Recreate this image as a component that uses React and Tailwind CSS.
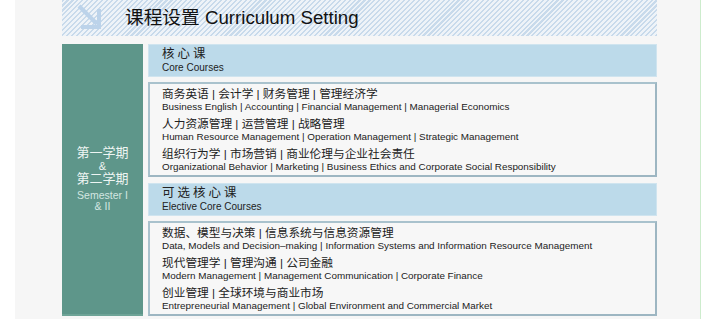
import React from 'react';

const coreGroups = [
    {
        cn: '商务英语 | 会计学 | 财务管理 | 管理经济学',
        en: 'Business English | Accounting | Financial Management | Managerial Economics',
    },
    {
        cn: '人力资源管理 | 运营管理 | 战略管理',
        en: 'Human Resource Management | Operation Management | Strategic Management',
    },
    {
        cn: '组织行为学 | 市场营销 | 商业伦理与企业社会责任',
        en: 'Organizational Behavior | Marketing | Business Ethics and Corporate Social Responsibility',
    },
];

const electiveGroups = [
    {
        cn: '数据、模型与决策 | 信息系统与信息资源管理',
        en: 'Data, Models and Decision–making | Information Systems and Information Resource Management',
    },
    {
        cn: '现代管理学 | 管理沟通 | 公司金融',
        en: 'Modern Management | Management Communication | Corporate Finance',
    },
    {
        cn: '创业管理 | 全球环境与商业市场',
        en: 'Entrepreneurial Management | Global Environment and Commercial Market',
    },
];

const SectionHeader = ({ cn, en }) => (
    <div className="h-[33px] bg-[#bcdaea] border border-[#cfe4ef] pl-[13px] flex flex-col justify-center">
        <div className="text-[12.5px] leading-[15px] tracking-[3px] text-[#222]">{cn}</div>
        <div className="text-[10px] leading-[12px] text-[#222]">{en}</div>
    </div>
);

const CourseBox = ({ groups }) => (
    <div className="h-[95px] border-2 border-[#a9c2cd] border-r-[#9db6c2] border-b-[#9db6c2] bg-[#f7f7f7] pl-[12px] flex flex-col justify-center gap-[3px]">
        {groups.map((g, i) => (
            <div key={i}>
                <div className="text-[11.7px] leading-[15px] text-[#222] whitespace-nowrap">{g.cn}</div>
                <div className="text-[9.9px] leading-[12px] text-[#222] whitespace-nowrap">{g.en}</div>
            </div>
        ))}
    </div>
);

const App = () => {
    return (
        <div
            className="w-[701px] h-[320px] bg-white overflow-hidden"
            style={{ fontFamily: '"Liberation Sans", "Noto Sans CJK SC", sans-serif' }}
        >
            <div className="ml-[15px] w-[686px] h-[319px] bg-[#f6f6f6] border-r border-[#cdeccd] pl-[47px]">
                {/* Header */}
                <div className="w-[595px] h-[36px] flex items-center bg-[repeating-linear-gradient(135deg,#c8daeb_0px,#c8daeb_1.5px,#eef3f8_1.5px,#eef3f8_3.5px)]">
                    <svg width="40" height="36" viewBox="0 0 40 36" className="ml-[11px]">
                        <path d="M6 6 L24 24" stroke="#bcd3ea" strokeWidth="4" fill="none" />
                        <path d="M26 9 V27 H8" stroke="#bcd3ea" strokeWidth="4" fill="none" />
                    </svg>
                    <div className="ml-[12px] text-[18.7px] leading-none text-[#111] whitespace-nowrap">
                        课程设置 Curriculum Setting
                    </div>
                </div>

                {/* Body */}
                <div className="mt-[8px] flex gap-[5px]">
                    <div className="w-[81px] h-[272px] bg-[#5e968a] border-b-2 border-[#6ea497] flex flex-col items-center justify-center text-center">
                        <div className="text-[13px] leading-[14px] text-[#eef5f3]">第一学期</div>
                        <div className="text-[11px] leading-[12px] text-[#eef5f3]">&amp;</div>
                        <div className="text-[13px] leading-[14px] text-[#eef5f3]">第二学期</div>
                        <div className="mt-[4px] text-[10.5px] leading-[11px] text-[#d3e6e1]">Semester I</div>
                        <div className="text-[10.5px] leading-[11px] text-[#d3e6e1]">&amp; II</div>
                    </div>
                    <div className="w-[509px] flex flex-col">
                        <SectionHeader cn="核心课" en="Core Courses" />
                        <div className="mt-[5px]">
                            <CourseBox groups={coreGroups} />
                        </div>
                        <div className="mt-[6px]">
                            <SectionHeader cn="可选核心课" en="Elective Core Courses" />
                        </div>
                        <div className="mt-[5px]">
                            <CourseBox groups={electiveGroups} />
                        </div>
                    </div>
                </div>
            </div>
        </div>
    );
};

export default App;
